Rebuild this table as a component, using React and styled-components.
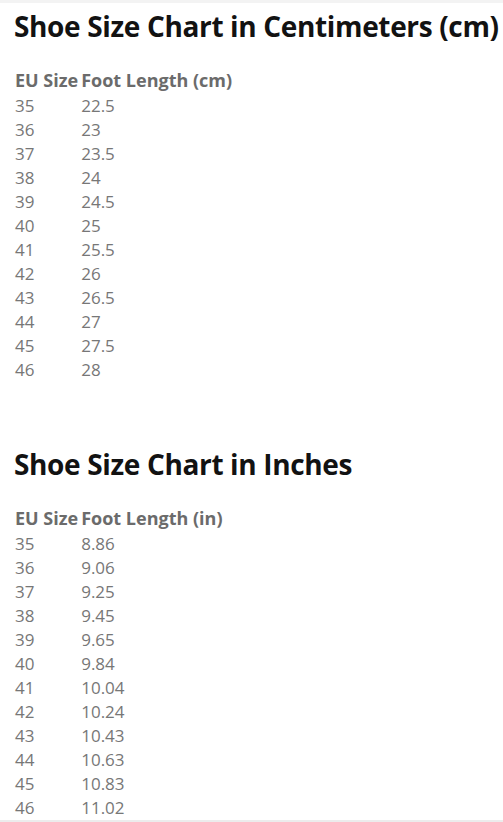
import React from "react";
import styled, { createGlobalStyle } from "styled-components";

const GlobalStyle = createGlobalStyle`
  html, body {
    margin: 0;
    padding: 0;
    background: #fff;
  }
  body {
    font-family: "Open Sans", "Noto Sans", sans-serif;
  }
`;

const Page = styled.div`
  min-height: 822px;
  box-sizing: border-box;
  padding: 4px 8px 0 15px;
  border-top: 3px solid #f3f3f3;
  border-bottom: 5px solid #ececec;
`;

const Section = styled.section`
  margin-bottom: ${(p) => p.gap || 0}px;
`;

const Title = styled.h2`
  margin: 0 0 23px -1px;
  font-size: 28px;
  line-height: 38px;
  font-weight: 700;
  color: #121212;
  letter-spacing: -0.35px;
  white-space: nowrap;
`;

const Table = styled.table`
  border-collapse: collapse;
  border-spacing: 0;
`;

const Th = styled.th`
  padding: 0 ${(p) => (p.first ? 3 : 0)}px 2px 0;
  text-align: left;
  font-size: 18px;
  line-height: 24px;
  font-weight: 700;
  color: #6b6b6b;
  white-space: nowrap;
`;

const Td = styled.td`
  padding: 0;
  font-size: 17px;
  line-height: 24px;
  font-weight: 400;
  color: #777;
`;

const cm = [
  ["35", "22.5"],
  ["36", "23"],
  ["37", "23.5"],
  ["38", "24"],
  ["39", "24.5"],
  ["40", "25"],
  ["41", "25.5"],
  ["42", "26"],
  ["43", "26.5"],
  ["44", "27"],
  ["45", "27.5"],
  ["46", "28"],
];

const inches = [
  ["35", "8.86"],
  ["36", "9.06"],
  ["37", "9.25"],
  ["38", "9.45"],
  ["39", "9.65"],
  ["40", "9.84"],
  ["41", "10.04"],
  ["42", "10.24"],
  ["43", "10.43"],
  ["44", "10.63"],
  ["45", "10.83"],
  ["46", "11.02"],
];

const SizeTable = ({ unit, rows }) => (
  <Table>
    <thead>
      <tr>
        <Th first>EU Size</Th>
        <Th>Foot Length ({unit})</Th>
      </tr>
    </thead>
    <tbody>
      {rows.map(([eu, len]) => (
        <tr key={eu}>
          <Td>{eu}</Td>
          <Td>{len}</Td>
        </tr>
      ))}
    </tbody>
  </Table>
);

export default function App() {
  return (
    <Page>
      <GlobalStyle />
      <Section gap={63}>
        <Title>Shoe Size Chart in Centimeters (cm)</Title>
        <SizeTable unit="cm" rows={cm} />
      </Section>
      <Section>
        <Title>Shoe Size Chart in Inches</Title>
        <SizeTable unit="in" rows={inches} />
      </Section>
    </Page>
  );
}
